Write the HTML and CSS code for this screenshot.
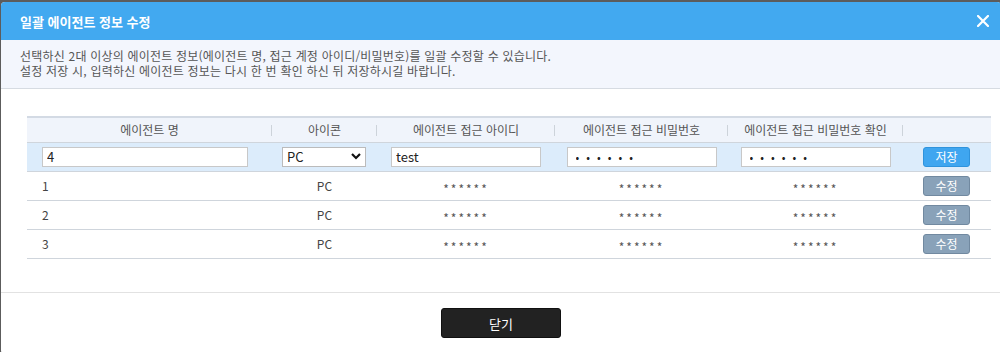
FILE: index.html
```html
<!DOCTYPE html>
<html lang="ko">
<head>
  <meta charset="UTF-8" />
  <title>일괄 에이전트 정보 수정</title>
  <link rel="stylesheet" href="styles.css">
</head>
<body>

  <div class="modal">
    <div class="modal-header">
      <h2>일괄 에이전트 정보 수정</h2>
      <button class="close" type="button" aria-label="닫기">
        <svg width="12" height="12" viewBox="0 0 12 12">
          <path d="M1 1 L11 11 M11 1 L1 11" stroke="#fff" stroke-width="2.2" stroke-linecap="square"/>
        </svg>
      </button>
    </div>

    <div class="modal-desc">
      <p>선택하신 2대 이상의 에이전트 정보(에이전트 명, 접근 계정 아이디/비밀번호)를 일괄 수정할 수 있습니다.</p>
      <p>설정 저장 시, 입력하신 에이전트 정보는 다시 한 번 확인 하신 뒤 저장하시길 바랍니다.</p>
    </div>

    <div class="modal-body">
      <table class="agent-table">
        <colgroup>
          <col style="width:245px">
          <col style="width:105px">
          <col style="width:178px">
          <col style="width:173px">
          <col style="width:175px">
          <col style="width:88px">
        </colgroup>
        <thead>
          <tr>
            <th>에이전트 명</th>
            <th>아이콘</th>
            <th>에이전트 접근 아이디</th>
            <th>에이전트 접근 비밀번호</th>
            <th>에이전트 접근 비밀번호 확인</th>
            <th class="no-sep"></th>
          </tr>
        </thead>
        <tbody>
          <tr class="edit-row">
            <td class="left"><input type="text" class="field name-field" value="4"></td>
            <td>
              <div class="select">
                <span>PC</span>
                <svg width="10" height="7" viewBox="0 0 10 7"><path d="M1 1 L5 5 L9 1" stroke="#111" stroke-width="2.2" fill="none"/></svg>
              </div>
            </td>
            <td><input type="text" class="field" value="test"></td>
            <td><input type="text" class="field pw" value="••••••"></td>
            <td><input type="text" class="field pw" value="••••••"></td>
            <td><button type="button" class="btn-sm btn-save">저장</button></td>
          </tr>
          <tr>
            <td class="left">1</td>
            <td>PC</td>
            <td class="mask">******</td>
            <td class="mask">******</td>
            <td class="mask">******</td>
            <td><button type="button" class="btn-sm btn-edit">수정</button></td>
          </tr>
          <tr>
            <td class="left">2</td>
            <td>PC</td>
            <td class="mask">******</td>
            <td class="mask">******</td>
            <td class="mask">******</td>
            <td><button type="button" class="btn-sm btn-edit">수정</button></td>
          </tr>
          <tr>
            <td class="left">3</td>
            <td>PC</td>
            <td class="mask">******</td>
            <td class="mask">******</td>
            <td class="mask">******</td>
            <td><button type="button" class="btn-sm btn-edit">수정</button></td>
          </tr>
        </tbody>
      </table>
    </div>

    <div class="modal-footer">
      <button type="button" class="btn-close">닫기</button>
    </div>
  </div>

</body>
</html>
```

FILE: styles.css
```css
* {
  box-sizing: border-box;
}

body {
  margin: 0;
  background: #5c5c5c;
  font-family: "Noto Sans CJK KR", "Noto Sans", sans-serif;
  color: #444;
  padding: 2px 0 0 1px;
  height: 352px;
  overflow: hidden;
}

.modal {
  background: #fff;
  width: 1000px;
  height: 352px;
  border-radius: 4px 4px 0 4px;
  overflow: hidden;
}

.modal-header {
  height: 38px;
  background: #42a9f0;
  display: flex;
  align-items: center;
  justify-content: space-between;
  padding: 0 12px 0 19px;
}

.modal-header h2 {
  margin: 0;
  font-size: 13px;
  font-weight: bold;
  color: #fff;
}

.close {
  border: none;
  background: none;
  padding: 0;
  width: 12px;
  height: 12px;
  display: flex;
}

.modal-desc {
  background: #f3f6fd;
  border-bottom: 1px solid #d6dbe2;
  padding: 8px 19px 8px;
  height: 49px;
}

.modal-desc p {
  margin: 0;
  font-size: 12px;
  line-height: 15px;
  letter-spacing: 0.2px;
  color: #555;
}

.modal-body {
  padding: 27px 0 0 26px;
  height: 204px;
  border-bottom: 1px solid #e2e2e2;
}

.agent-table {
  border-collapse: collapse;
  table-layout: fixed;
  width: 964px;
  font-size: 12px;
  color: #444;
}

.agent-table thead tr {
  background: #f0f4fb;
  border-top: 2px solid #d3dae4;
}

.agent-table th {
  height: 25px;
  font-weight: normal;
  color: #555;
  position: relative;
  padding: 0;
}

.agent-table th::after {
  content: "";
  position: absolute;
  right: 0;
  top: 7px;
  width: 1px;
  height: 11px;
  background: #cdd3da;
}

.agent-table th.no-sep::after {
  display: none;
}

.agent-table td {
  height: 29px;
  text-align: center;
  border-bottom: 1px solid #cfd5dc;
  padding: 0;
}

.agent-table td.left {
  text-align: left;
  padding-left: 15px;
}

.edit-row {
  background: #dcecfb;
}

.agent-table .edit-row td {
  height: 29px;
  border-top: 1px solid #cfd5dc;
}

.field {
  width: 150px;
  height: 20px;
  border: 1px solid #c8c8c8;
  background: #fff;
  font: inherit;
  font-size: 13px;
  color: #222;
  padding: 0 4px;
  display: block;
  margin: 0 auto;
}

.name-field {
  width: 206px;
  margin: 0;
}

.field.pw {
  letter-spacing: 7px;
  font-size: 11px;
  padding-left: 8px;
}

.select {
  width: 84px;
  height: 20px;
  border: 1px solid #bbb;
  background: #fff;
  margin: 0 0 0 10px;
  display: flex;
  align-items: center;
  justify-content: space-between;
  padding: 0 4px;
  font-size: 13px;
  color: #222;
}

.agent-table td.mask {
  letter-spacing: 2px;
  color: #555;
  font-size: 12px;
  padding-top: 5px;
}

.btn-sm {
  width: 47px;
  height: 20px;
  border-radius: 3px;
  color: #fff;
  font: inherit;
  font-size: 12px;
  padding: 0;
  margin-left: 20px;
  display: block;
}

.btn-save {
  background: #3fa6f0;
  border: 1px solid #2f93dc;
}

.btn-edit {
  background: #89a2b9;
  border: 1px solid #7189a0;
}

.modal-footer {
  display: flex;
  justify-content: center;
  padding-top: 15px;
}

.btn-close {
  width: 120px;
  height: 30px;
  background: #222;
  border: 1px solid #111;
  border-radius: 3px;
  color: #fff;
  font: inherit;
  font-size: 13px;
}
```
